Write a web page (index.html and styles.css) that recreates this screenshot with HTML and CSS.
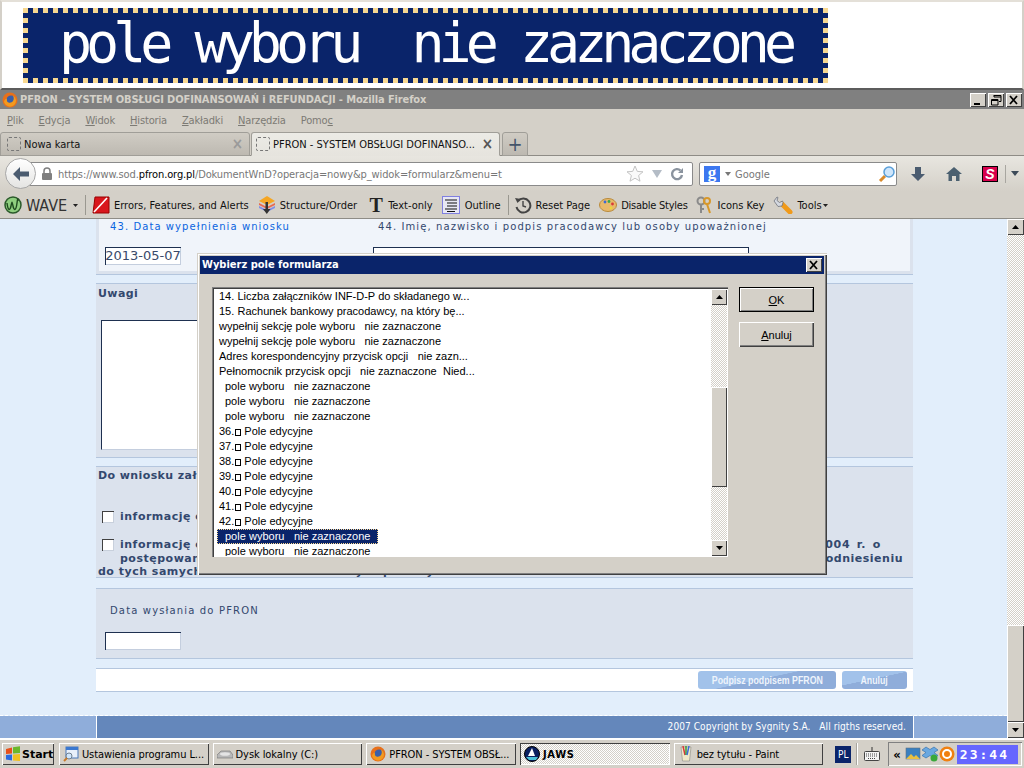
FILE: index.html
```html
<!DOCTYPE html>
<html lang="pl">
<head>
<meta charset="utf-8">
<title>PFRON</title>
<link rel="stylesheet" href="styles.css">
</head>
<body>
<div class="screen">
  <header class="banner"><div class="banner-box">pole wyboru  nie zaznaczone</div></header>

  <div class="titlebar">
    <svg class="ff" viewBox="0 0 16 16" width="16" height="16"><circle cx="8" cy="8" r="7.500" fill="#e8701a"/><circle cx="9" cy="8" r="4.600" fill="#3a5fa8"/><path d="M2 10c1 3 4 5 7 4.600 3-.4 5-3 5-6 0-2-1-4-3-5 1 2 1 4 0 5.500-1 1.500-3 2-4.500 1.400C5 10 4.500 8 5 6.500 3 7 2 8.500 2 10z" fill="#f39a1e"/></svg>
    <span class="title-text">PFRON - SYSTEM OBSŁUGI DOFINANSOWAŃ i REFUNDACJI - Mozilla Firefox</span>
    <div class="winbtns">
      <span class="winbtn"><svg viewBox="0 0 16 14" width="16" height="14"><rect x="4" y="10" width="6" height="2" fill="#000"/></svg></span>
      <span class="winbtn"><svg viewBox="0 0 16 14" width="16" height="14"><path d="M6 2.500h7v6H11M6 2v2h7M3.500 6.500h6.500v5.500H3.500zM3 7.500h7" fill="none" stroke="#000"/></svg></span>
      <span class="winbtn"><svg viewBox="0 0 16 14" width="16" height="14"><path d="M4 3l7 8M11 3l-7 8" stroke="#000" stroke-width="1.800"/></svg></span>
    </div>
  </div>

  <nav class="menubar">
    <span><u>P</u>lik</span><span><u>E</u>dycja</span><span><u>W</u>idok</span><span><u>H</u>istoria</span><span><u>Z</u>akładki</span><span><u>N</u>arzędzia</span><span>Pomo<u>c</u></span>
  </nav>

  <div class="tabbar">
    <div class="tab"><i class="tab-ico"></i><span class="tab-label">Nowa karta</span><b class="tab-x">×</b></div>
    <div class="tab tab-on"><i class="tab-ico"></i><span class="tab-label">PFRON - SYSTEM OBSŁUGI DOFINANSO...</span><b class="tab-x">×</b></div>
    <div class="tab tab-plus">+</div>
  </div>

  <div class="navbar">
    <div class="back"><svg viewBox="0 0 20 20" width="20" height="20"><path d="M2 10l7-7v4.500h9v5H9V17z" fill="#4b5c70"/></svg></div>
    <div class="urlbar">
      <svg class="lock" viewBox="0 0 12 14" width="12" height="14"><rect x="1" y="6" width="10" height="7" rx="1" fill="#7f7f7f"/><path d="M3 6V4a3 3 0 016 0v2" fill="none" stroke="#7f7f7f" stroke-width="1.500"/></svg>
      <span class="url">https://www.sod.<b>pfron.org.pl</b>/DokumentWnD?operacja=nowy&amp;p_widok=formularz&amp;menu=t</span>
      <svg viewBox="0 0 18 18" width="18" height="18"><path d="M9 1l2.300 5.400 5.700.4-4.400 3.700 1.400 5.700L9 13.200l-5 3 1.400-5.700L1 6.800l5.700-.4z" fill="#fafafa" stroke="#c4c4c4"/></svg>
      <svg class="drop" viewBox="0 0 10 8" width="10" height="8"><path d="M0 0h10L5 8z" fill="#b4bcc6"/></svg>
      <svg viewBox="0 0 14 14" width="14" height="14"><path d="M12 8a5 5 0 11-1.500-4.500" fill="none" stroke="#8a939e" stroke-width="2.400"/><path d="M13 1v5H8z" fill="#8a939e"/></svg>
    </div>
    <div class="searchbar">
      <span class="gbox">g</span>
      <svg class="tiny" viewBox="0 0 6 4" width="6" height="4"><path d="M0 0h6L3 4z" fill="#777"/></svg>
      <span class="gtext">Google</span>
      <svg viewBox="0 0 18 18" width="18" height="18"><path d="M2 16l5-5" stroke="#d98a2b" stroke-width="3"/><circle cx="11" cy="7" r="5" fill="#cfe6fb" stroke="#5a9fd8" stroke-width="1.500"/></svg>
    </div>
    <svg class="dl" viewBox="0 0 16 16" width="16" height="16"><path d="M5 1h6v7h4l-7 7-7-7h4z" fill="#4b5c70"/></svg>
    <svg class="home" viewBox="0 0 16 16" width="16" height="16"><path d="M8 1L0 8h2.500v7H6v-5h4v5h3.500V8H16z" fill="#4b6070"/></svg>
    <span class="sbox">S</span>
    <span class="navsep"></span>
    <svg class="navdrop" viewBox="0 0 8 5" width="8" height="5"><path d="M0 0h8L4 5z" fill="#3c4a58"/></svg>
  </div>

  <div class="wavebar">
    <svg class="w-ico" viewBox="0 0 18 18" width="18" height="18"><circle cx="9" cy="9" r="8" fill="#8fcf7f" stroke="#2b5a2b" stroke-width="1.500"/><path d="M3 7c1 8 3 8 4 3s1-5 2 0 3 5 4-3 1-2 1-2" fill="none" stroke="#1f4a1f" stroke-width="1.400"/></svg>
    <span class="wave-name">WAVE</span>
    <svg class="wave-drop" viewBox="0 0 5 3" width="5" height="3"><path d="M0 0h5L2.500 3z" fill="#222"/></svg>
    <span class="wsep"></span>
    <span class="witem w-err"><svg viewBox="0 0 18 18" width="18" height="18"><path d="M3 1h14v16H1z" fill="#d9161c" stroke="#900"/><path d="M2 16L15 2" stroke="#fff" stroke-width="1.600"/></svg>Errors, Features, and Alerts</span>
    <span class="witem w-str"><svg viewBox="0 0 18 18" width="18" height="18"><path d="M9 0l8 5-8 4-8-4z" fill="#f5a623"/><path d="M1 7l8 4 8-4v2l-8 4-8-4z" fill="#e86a50"/><path d="M1 10l8 4 8-4v2l-8 4-8-4z" fill="#7f8fe8"/><path d="M7.500 6h2.500v7h2.500l-3.700 5-3.800-5h2.500z" fill="#333"/></svg>Structure/Order</span>
    <span class="witem w-txt"><span class="big-t">T</span>Text-only</span>
    <span class="witem w-out"><svg class="outline-ico" viewBox="0 0 18 18" width="18" height="18"><rect x=".5" y=".5" width="17" height="17" fill="#e8e8f4" stroke="#8080e0"/><path d="M3 4h12M5 7h10M5 10h10M3 13h12M5 15.500h8" stroke="#111" stroke-width="1.200"/></svg>Outline</span>
    <span class="wsep"></span>
    <span class="witem w-res"><svg viewBox="0 0 18 18" width="18" height="18"><path d="M4 5a7 7 0 11-1.500 6" fill="none" stroke="#444" stroke-width="2"/><path d="M1 2l6 1-3.500 4z" fill="#444"/><path d="M9 5v5l3 1" fill="none" stroke="#444" stroke-width="1.400"/></svg>Reset Page</span>
    <span class="witem w-pal"><svg viewBox="0 0 18 16" width="18" height="16"><ellipse cx="9" cy="8" rx="8.500" ry="6.500" fill="#e8b96a" stroke="#b98a3a"/><circle cx="6" cy="5" r="1.400" fill="#3a6ad8"/><circle cx="10" cy="4.500" r="1.400" fill="#3aa84a"/><circle cx="13.500" cy="7" r="1.400" fill="#d83a3a"/><circle cx="12" cy="11" r="1.400" fill="#e8d83a"/></svg>Disable Styles</span>
    <span class="witem w-key"><svg viewBox="0 0 18 18" width="18" height="18"><circle cx="6" cy="5" r="3.500" fill="none" stroke="#8a8a8a" stroke-width="2"/><path d="M6 8v9M6 13h3" stroke="#8a8a8a" stroke-width="2"/><circle cx="12" cy="5" r="3" fill="none" stroke="#d8982a" stroke-width="2"/><path d="M12 8l3 9" stroke="#d8982a" stroke-width="2"/></svg>Icons Key</span>
    <span class="witem w-tool"><svg viewBox="0 0 20 18" width="20" height="18"><path d="M9 8l8 8" stroke="#f09a1a" stroke-width="5" stroke-linecap="round"/><path d="M1 5l3-4 1 .5-1 3 2.500 2 3-1.500.5 1.500-1 3.500-4 .5z" fill="#d4d8e0" stroke="#70747c" stroke-width=".8"/></svg>Tools<svg class="tool-drop" viewBox="0 0 5 3" width="5" height="3"><path d="M0 0h5L2.500 3z" fill="#222"/></svg></span>
  </div>

  <div class="viewport">
    <div class="page">
      <main class="content">
        <section class="sec sec-top">
          <div class="sec-inner">
            <div class="col-a">
              <div class="lbl-blue">43. Data wypełnienia wniosku</div>
              <div class="date-input">2013-05-07</div>
            </div>
            <div class="col-b">
              <div class="lbl-dark">44. Imię, nazwisko i podpis pracodawcy lub osoby upoważnionej</div>
              <div class="sign-box"></div>
            </div>
          </div>
        </section>

        <section class="sec sec-notes">
          <div class="sec-title">Uwagi</div>
          <div class="notes-box"></div>
        </section>

        <section class="sec sec-attach">
          <div class="sec-title">Do wniosku załączam:</div>
          <div class="check-row check-one"><i class="check"></i><span>informację o</span></div>
          <div class="check-row check-two"><i class="check"></i><span>informację o</span><span class="far">2004 r. o</span></div>
          <div class="cont-line"><span class="indent">postępowaniu</span><span class="far far-2">odniesieniu</span></div>
          <div class="cont-line">do tych samych kosztów kwalifikowalnych pomocy</div>
        </section>

        <section class="sec sec-send">
          <div class="send-label">Data wysłania do PFRON</div>
          <div class="send-input"></div>
        </section>

        <section class="actions">
          <button class="act act-sign"><span class="act-text">Podpisz podpisem PFRON</span></button>
          <button class="act act-cancel"><span class="act-text">Anuluj</span></button>
        </section>
      </main>
      <footer class="footer">
        <div class="foot-side"></div>
        <div class="foot-main">2007 Copyright by Sygnity S.A.&nbsp;&nbsp; All rigths reserved.</div>
        <div class="foot-rest"></div>
      </footer>
    </div>
    <div class="vscroll">
      <span class="sb-btn"><svg viewBox="0 0 7 4" width="7" height="4"><path d="M0 4h7L3.500 0z"/></svg></span>
      <span class="sb-track sb-track-page"></span>
      <span class="sb-thumb sb-thumb-page"></span>
      <span class="sb-btn"><svg viewBox="0 0 7 4" width="7" height="4"><path d="M0 0h7L3.500 4z"/></svg></span>
    </div>
  </div>

  <footer class="taskbar">
    <button class="start"><svg viewBox="0 0 16 16" width="16" height="16"><path d="M1 3l6-1.500V7.500L1 8z" fill="#e8501a"/><path d="M8 1.300l7-1V7l-7 .5z" fill="#6ab82a"/><path d="M1 9l6-.5V14.500L1 13.500z" fill="#2a6ae0"/><path d="M8 8.500l7-.5v7l-7-.5z" fill="#f0c020"/></svg>Start</button>
    <button class="task"><svg viewBox="0 0 16 16" width="16" height="16"><rect x="3" y="1" width="12" height="11" fill="#e8f0fa" stroke="#4a78b8"/><rect x="3" y="1" width="12" height="3" fill="#3a78d0"/><circle cx="6" cy="10" r="3" fill="#cfe6fb" stroke="#708090"/><path d="M4 12l-3 3" stroke="#c87a2a" stroke-width="2"/></svg><span>Ustawienia programu L...</span></button>
    <button class="task"><svg viewBox="0 0 16 16" width="16" height="16"><path d="M0 9l4-4h9l3 4v3H0z" fill="#b8b8b8" stroke="#707070" stroke-width=".6"/><ellipse cx="8" cy="8" rx="5" ry="1.800" fill="#e4e4e4"/></svg><span>Dysk lokalny (C:)</span></button>
    <button class="task"><svg viewBox="0 0 16 16" width="16" height="16"><circle cx="8" cy="8" r="7.500" fill="#e8701a"/><circle cx="9" cy="8" r="4.600" fill="#3a5fa8"/><path d="M2 10c1 3 4 5 7 4.600 3-.4 5-3 5-6 0-2-1-4-3-5 1 2 1 4 0 5.500-1 1.500-3 2-4.500 1.400C5 10 4.500 8 5 6.500 3 7 2 8.500 2 10z" fill="#f39a1e"/></svg><span>PFRON - SYSTEM OBSŁ...</span></button>
    <button class="task task-on"><svg viewBox="0 0 16 16" width="16" height="16"><circle cx="8" cy="8" r="7.500" fill="#0a1f60" stroke="#000"/><path d="M8 2l3 8H4z" fill="#fff"/><path d="M2 11h12l-2 3H5z" fill="#4ac0d8"/></svg><span>JAWS</span></button>
    <button class="task"><svg viewBox="0 0 16 16" width="16" height="16"><path d="M3 1h10l-1.500 14h-7z" fill="#f0e8c8" stroke="#888" stroke-width=".6"/><path d="M5 0l2 9" stroke="#d83a3a" stroke-width="1.500"/><path d="M8 0v9" stroke="#3a9a3a" stroke-width="1.500"/><path d="M11 0L9 9" stroke="#3a6ad8" stroke-width="1.500"/></svg><span>bez tytułu - Paint</span></button>
    <span class="lang">PL</span>
    <span class="tsep"></span>
    <svg class="kbd" viewBox="0 0 16 16" width="16" height="16"><path d="M8 1v4" stroke="#333"/><rect x=".5" y="5.500" width="15" height="9" rx="1" fill="#f4f4f4" stroke="#444"/><path d="M2 8h12M2 10h12M4 12.500h8" stroke="#444" stroke-dasharray="1 1"/></svg>
    <div class="tray">
      <b class="tray-more">«</b>
      <svg viewBox="0 0 16 16" width="16" height="16"><rect x="1" y="2" width="14" height="11" fill="#3a80c0" stroke="#607080" stroke-width=".6"/><path d="M1 13l5-5 3 3 2-2 4 4z" fill="#e8c040"/></svg>
      <svg viewBox="0 0 16 16" width="16" height="16"><path d="M4 1l4 2.500L12 1l4 3-4 2.500 4 3-4 2.500-4-2.500L4 12 0 9.500l4-3-4-2.500z" fill="#6aa8e0" stroke="#2a68a8" stroke-width=".6"/><circle cx="12" cy="12" r="3.500" fill="#3aa83a"/></svg>
      <svg viewBox="0 0 16 16" width="16" height="16"><circle cx="8" cy="8" r="7.500" fill="#f08010"/><circle cx="8" cy="8" r="4" fill="none" stroke="#fff" stroke-width="2"/></svg>
      <span class="clock">23:44</span>
    </div>
  </footer>

  <div class="dialog">
    <div class="dlg-title"><span>Wybierz pole formularza</span><span class="dlg-close"><svg viewBox="0 0 16 14" width="16" height="14"><path d="M4 3l7 8M11 3l-7 8" stroke="#000" stroke-width="1.800"/></svg></span></div>
    <div class="dlg-body">
      <div class="listbox">
        <ul class="rows">
          <li>14. Liczba załączników INF-D-P do składanego w...</li>
          <li>15. Rachunek bankowy pracodawcy, na który bę...</li>
          <li>wypełnij sekcję pole wyboru&nbsp;&nbsp; nie zaznaczone</li>
          <li>wypełnij sekcję pole wyboru&nbsp;&nbsp; nie zaznaczone</li>
          <li>Adres korespondencyjny przycisk opcji&nbsp;&nbsp; nie zazn...</li>
          <li>Pełnomocnik przycisk opcji&nbsp;&nbsp; nie zaznaczone&nbsp; Nied...</li>
          <li class="pad">pole wyboru&nbsp;&nbsp; nie zaznaczone</li>
          <li class="pad">pole wyboru&nbsp;&nbsp; nie zaznaczone</li>
          <li class="pad">pole wyboru&nbsp;&nbsp; nie zaznaczone</li>
          <li>36.<i class="sq"></i>Pole edycyjne</li>
          <li>37.<i class="sq"></i>Pole edycyjne</li>
          <li>38.<i class="sq"></i>Pole edycyjne</li>
          <li>39.<i class="sq"></i>Pole edycyjne</li>
          <li>40.<i class="sq"></i>Pole edycyjne</li>
          <li>41.<i class="sq"></i>Pole edycyjne</li>
          <li>42.<i class="sq"></i>Pole edycyjne</li>
          <li class="pad"><span class="selected">pole wyboru&nbsp;&nbsp; nie zaznaczone</span></li>
          <li class="pad">pole wyboru&nbsp;&nbsp; nie zaznaczone</li>
        </ul>
        <div class="list-scroll">
          <span class="sb-btn"><svg viewBox="0 0 7 4" width="7" height="4"><path d="M0 4h7L3.500 0z"/></svg></span>
          <span class="sb-track sb-track-a"></span>
          <span class="sb-thumb sb-thumb-list"></span>
          <span class="sb-track sb-track-b"></span>
          <span class="sb-btn"><svg viewBox="0 0 7 4" width="7" height="4"><path d="M0 0h7L3.500 4z"/></svg></span>
        </div>
      </div>
      <div class="dlg-actions">
        <button class="dlg-btn dlg-ok"><u>O</u>K</button>
        <button class="dlg-btn"><u>A</u>nuluj</button>
      </div>
    </div>
  </div>
</div>
</body>
</html>
```
FILE: styles.css
```css
* { box-sizing: border-box; }
html, body { margin: 0; padding: 0; }
body { width: 1024px; height: 768px; overflow: hidden; background: #d4d0c8; font-family: "DejaVu Sans Condensed", "DejaVu Sans", sans-serif; font-size: 11px; color: #000; }
button { font: inherit; padding: 0; margin: 0; }
svg { display: block; flex: none; }
u { text-decoration: underline; }

.screen { position: relative; width: 1024px; height: 768px; display: flex; flex-direction: column; }

/* banner */
.banner { height: 90px; flex: none; background: #fff; border: 2px solid #d4d0c8; border-bottom: 2px solid #5c5c5c; border-top-color: #e4e0d8; padding: 6px 0 0 21px; }
.banner-box {
  width: 805px; height: 75px; color: #fff; padding-left: 36px; overflow: hidden;
  font-family: "DejaVu Sans Mono", monospace; font-size: 55px; letter-spacing: -6px; line-height: 70px; white-space: pre;
  background:
    repeating-linear-gradient(90deg, #f8d890 0 5px, #0a246a 5px 10px) left top / 100% 5px no-repeat,
    repeating-linear-gradient(90deg, #f8d890 0 5px, #0a246a 5px 10px) left bottom / 100% 5px no-repeat,
    repeating-linear-gradient(180deg, #f8d890 0 5px, #0a246a 5px 10px) left top / 5px 100% no-repeat,
    repeating-linear-gradient(180deg, #f8d890 0 5px, #0a246a 5px 10px) right top / 5px 100% no-repeat,
    #0a246a;
}

/* title */
.titlebar { height: 19px; flex: none; background: #808080; display: flex; align-items: center; padding-left: 2px; color: #d4d0c8; font-weight: bold; }
.title-text { margin-left: 2px; font-size: 11px; letter-spacing: -.12px; white-space: nowrap; }
.winbtns { margin-left: auto; margin-right: 2px; display: flex; gap: 2px; }
.winbtn, .dlg-close { width: 16px; height: 14px; background: #d4d0c8; display: block; box-shadow: inset 1px 1px 0 #fff, inset -1px -1px 0 #404040; }

/* menu */
.menubar { height: 22px; flex: none; display: flex; align-items: center; padding-left: 7px; gap: 15px; color: #7c7a74; font-size: 11px; letter-spacing: -.15px; }

/* tabs */
.tabbar { height: 25px; flex: none; display: flex; align-items: flex-end; border-bottom: 1px solid #8e8c86; gap: 1px; }
.tab { width: 250px; height: 24px; margin-bottom: -1px; background: linear-gradient(#d0ccc4, #bdb9b1); border: 1px solid #a09e98; border-radius: 3px 3px 0 0; display: flex; align-items: center; padding: 0 6px; color: #111; }
.tab-on { width: 249px; padding-left: 4px; background: linear-gradient(#ecebe6, #e6e4de); border-bottom-color: #e6e4de; }
.tab-ico { width: 14px; height: 14px; border: 1px dashed #777; border-radius: 2px; flex: none; }
.tab-label { margin-left: 3px; flex: 1; white-space: nowrap; overflow: hidden; }
.tab-x { font-size: 15px; line-height: 14px; color: #9a9a9a; }
.tab-on .tab-x { color: #555; }
.tab-plus { width: 26px; margin-left: 1px; justify-content: center; font-size: 20px; color: #44556a; padding: 0; }

/* nav */
.navbar { height: 35px; flex: none; background: linear-gradient(#e8e6e0, #d4d0c8); display: flex; align-items: center; padding-left: 5px; }
.back { width: 31px; height: 31px; border-radius: 50%; background: linear-gradient(#fff, #e4e4e2); border: 1px solid #a8a8a8; display: flex; align-items: center; justify-content: center; position: relative; z-index: 1; flex: none; }
.urlbar { width: 668px; height: 24px; margin-left: -11px; background: #fff; border: 1px solid #8a8a8a; border-radius: 2px; display: flex; align-items: center; padding-left: 15px; gap: 5px; }
.url { width: 563px; padding-top: 2px; color: #777; font-size: 11px; letter-spacing: -.11px; white-space: nowrap; }
.url b { font-weight: normal; color: #000; }
.drop { margin: 0 3px; }
.searchbar { width: 198px; height: 24px; margin-left: 6px; background: #fff; border: 1px solid #8a8a8a; border-radius: 2px; display: flex; align-items: center; padding-left: 4px; }
.gbox { width: 16px; height: 16px; background: #3c78f0; color: #fff; font-family: "Liberation Serif", serif; font-weight: bold; font-size: 17px; line-height: 13px; text-align: center; }
.tiny { margin-left: 5px; }
.gtext { margin-left: 4px; padding-top: 2px; flex: 1; color: #777; font-size: 11px; }
.dl { margin-left: 13px; }
.home { margin-left: 20px; }
.sbox { width: 16px; height: 16px; margin-left: 20px; background: #d8004c; border: 1px solid #000; color: #fff; font: italic bold 14px/14px "Liberation Sans", sans-serif; text-align: center; }
.navsep { width: 1px; height: 18px; margin-left: 7px; background: #a8a6a0; }
.navdrop { margin-left: 5px; }

/* wave */
.wavebar { height: 28px; flex: none; border-bottom: 1px solid #8e8c86; display: flex; align-items: center; padding: 1px 0 0 4px; color: #111; font-size: 11px; white-space: nowrap; }
.wave-name { margin-left: 4px; font-size: 16px; color: #333; width: 43px; }
.wave-drop { margin-left: 4px; }
.wsep { width: 1px; height: 20px; background: #9a9890; margin-left: 7px; }
.witem { display: flex; align-items: center; gap: 4px; }
.w-err { margin-left: 6px; }
.w-str { margin-left: 9px; }
.w-txt { margin-left: 11px; }
.big-t { font: bold 20px/18px "Liberation Serif", serif; width: 16px; text-align: center; color: #222; }
.w-out { margin-left: 9px; gap: 5px; }
.w-res { margin-left: 5px; }
.w-pal { margin-left: 9px; letter-spacing: -.25px; }
.w-key { margin-left: 7px; gap: 5px; }
.w-tool { margin-left: 9px; }
.tool-drop { margin-left: -3px; }

/* page */
.viewport { height: 519px; flex: none; display: flex; }
.page { flex: 1; display: flex; flex-direction: column; background: #e2eefb; min-width: 0; }
.content { width: 817px; margin-left: 96px; flex: 1; display: flex; flex-direction: column; font-family: "DejaVu Sans", sans-serif; color: #33486e; }
.sec { background: #dbe2ed; border-bottom: 1px solid #b4c6de; }
.sec-top { height: 56px; padding: 0 3px 3px 3px; }
.sec-inner { height: 52px; background: #f0f4fa; display: flex; overflow: hidden; }
.col-a { width: 274px; padding-top: 2px; }
.lbl-blue { margin-left: 11px; color: #0a64e0; font-size: 10px; line-height: 12px; letter-spacing: 1.080px; white-space: nowrap; }
.date-input { width: 76px; height: 18px; margin: 14px 0 0 6px; background: #fff; box-shadow: inset 1px 1px 0 #1e3050, inset -1px -1px 0 #c4cede; color: #3a4a6a; font-size: 13px; line-height: 18px; text-align: center; white-space: nowrap; }
.col-b { flex: 1; padding-top: 2px; }
.lbl-dark { margin-left: 5px; font-size: 10px; line-height: 12px; letter-spacing: 1.100px; color: #33486e; white-space: nowrap; }
.sign-box { width: 376px; height: 40px; margin-top: 14px; background: #fff; border: 1px solid #1e3050; }

.sec-notes { margin-top: 8px; height: 175px; border-top: 1px solid #b4c6de; padding: 3px 0 0 2px; }
.sec-title { font-size: 11px; font-weight: bold; letter-spacing: .4px; line-height: 14px; color: #33486e; white-space: nowrap; }
.notes-box { width: 300px; height: 130px; margin: 19px 0 0 3px; background: #fff; border: 1px solid #1e3050; border-right-color: #c4cede; border-bottom-color: #c4cede; }

.sec-attach { margin-top: 8px; height: 112px; border-top: 1px solid #b4c6de; padding: 2px 10px 0 2px; font-weight: bold; font-size: 11px; letter-spacing: .5px; white-space: nowrap; }
.check-row { display: flex; align-items: center; line-height: 14px; padding-left: 4px; gap: 6px; }
.check-one { margin-top: 27px; }
.check-two { margin-top: 14px; }
.check { width: 12px; height: 12px; background: #fff; box-shadow: inset 1px 1px 0 #404040, inset -1px -1px 0 #c8d0dc; flex: none; }
.far { margin-left: auto; margin-right: 22px; word-spacing: 2px; letter-spacing: .7px; }
.far-2 { margin-right: 0; letter-spacing: .5px; }
.cont-line { display: flex; line-height: 13px; }
.indent { margin-left: 22px; }

.sec-send { margin-top: 10px; height: 71px; border-top: 1px solid #b4c6de; padding: 16px 0 0 14px; }
.send-label { font-size: 10px; line-height: 12px; letter-spacing: 1.150px; color: #33486e; }
.send-input { width: 76px; height: 18px; margin: 15px 0 0 -5px; background: #fff; box-shadow: inset 1px 1px 0 #1e3050, inset -1px -1px 0 #c4cede; }

.actions { margin-top: 9px; height: 24px; background: #fff; border-top: 1px solid #b4c6de; border-bottom: 1px solid #b4c6de; display: flex; justify-content: flex-end; align-items: center; padding-right: 6px; gap: 6px; }
.act { height: 18px; border: 0; border-radius: 3px; background: linear-gradient(168deg, #a2c2ea 0 45%, #8fadda 46%); color: #eef4fc; font: bold 11px "Liberation Sans", sans-serif; white-space: nowrap; display: flex; align-items: center; justify-content: center; }
.act-text { display: block; transform: scaleX(.8); }
.act-sign { width: 138px; }
.act-cancel { width: 65px; }

.footer { height: 23px; flex: none; display: flex; border-top: 1px dashed #fff; }
.foot-side { width: 96px; background: #8fadda; flex: none; }
.foot-main { width: 818px; background: #6487bb; border-left: 1px solid #fff; border-right: 1px solid #fff; color: #fff; font-family: "DejaVu Sans Condensed", "DejaVu Sans", sans-serif; font-size: 10px; letter-spacing: .08px; line-height: 22px; text-align: right; padding-right: 7px; white-space: nowrap; flex: none; }
.foot-rest { flex: 1; background: #8fadda; }

/* scrollbars */
.vscroll { width: 17px; flex: none; display: flex; flex-direction: column; }
.sb-btn { height: 16px; flex: none; background: #d4d0c8; box-shadow: inset 1px 1px 0 #fff, inset -1px -1px 0 #404040; display: flex; align-items: center; justify-content: center; }
.sb-track { background-color: #fff; background-image: conic-gradient(#d4d0c8 25%, #fff 0 50%, #d4d0c8 0 75%, #fff 0); background-size: 2px 2px; display: block; }
.sb-track-page { height: 390px; flex: none; }
.sb-thumb { background: #d4d0c8; box-shadow: inset 1px 1px 0 #fff, inset -1px -1px 0 #404040; display: block; }
.sb-thumb-page { height: 97px; flex: none; }

/* taskbar */
.taskbar { height: 30px; flex: none; background: #d4d0c8; border-top: 2px solid #fff; display: flex; align-items: center; padding: 0 2px; }
.start, .task { height: 22px; border: 0; background: #d4d0c8; box-shadow: inset 1px 1px 0 #fff, inset -1px -1px 0 #404040; display: flex; align-items: center; color: #000; white-space: nowrap; }
.start { width: 52px; padding-left: 3px; gap: 1px; font: bold 11px "DejaVu Sans", sans-serif; }
.task { width: 150px; margin-left: 4px; padding-left: 4px; gap: 3px; font-size: 11px; letter-spacing: -.08px; }
.start + .task { margin-left: 5px; }
.task-on { background-color: #fff; background-image: conic-gradient(#d4d0c8 25%, #fff 0 50%, #d4d0c8 0 75%, #fff 0); background-size: 2px 2px; box-shadow: inset 1px 1px 0 #404040, inset -1px -1px 0 #fff; font-weight: bold; letter-spacing: .7px; }
.lang { width: 16px; height: 17px; margin-left: 12px; background: #0a246a; color: #fff; font-size: 10px; line-height: 17px; text-align: center; }
.tsep { width: 2px; height: 22px; margin-left: 5px; background: #a8a6a0; border-right: 1px solid #fff; }
.kbd { margin-left: 6px; }
.tray { margin-left: 8px; width: 134px; height: 24px; box-shadow: inset 1px 1px 0 #808080, inset -1px -1px 0 #fff; display: flex; align-items: center; padding-left: 5px; gap: 1px; }
.tray-more { font-size: 13px; margin-right: 3px; }
.clock { width: 61px; height: 19px; margin-left: 1px; padding-left: 3px; background: #6666ff; color: #fff; font: bold 13px/19px "DejaVu Sans Mono", monospace; letter-spacing: 2px; }

/* dialog */
.dialog { position: absolute; left: 197px; top: 253px; width: 630px; height: 322px; background: #d4d0c8; box-shadow: inset 1px 1px 0 #d4d0c8, inset 2px 2px 0 #fff, inset -1px -1px 0 #404040, inset -2px -2px 0 #808080; padding: 3px; display: flex; flex-direction: column; }
.dlg-title { height: 18px; flex: none; background: #0a246a; color: #fff; font: bold 11px/18px "DejaVu Sans Condensed", "DejaVu Sans", sans-serif; padding: 0 2px; display: flex; align-items: center; justify-content: space-between; }
.dlg-body { display: flex; padding: 13px 0 0 12px; gap: 11px; }
.listbox { width: 516px; height: 270px; display: flex; background: #fff; box-shadow: inset 1px 1px 0 #808080, inset 2px 2px 0 #404040, inset -1px -1px 0 #fff; padding: 2px 1px 1px 4px; }
.rows { list-style: none; margin: 0; padding: 0; flex: 1; height: 267px; overflow: hidden; font: 11px/15px "Liberation Sans", sans-serif; white-space: nowrap; word-spacing: .1px; }
.rows li { height: 15px; padding-left: 3px; }
.rows li.pad { padding-left: 9px; }
.selected { display: inline-block; margin-left: -8px; padding: 0 1px 0 8px; width: 161px; height: 15px; background: #0a246a; color: #fff; outline: 1px dotted #f8d890; outline-offset: -1px; }
.sq { display: inline-block; width: 6px; height: 7px; margin: 0 3px 0 1px; border: 1px solid #000; vertical-align: -1px; }
.list-scroll { width: 16px; flex: none; display: flex; flex-direction: column; height: 267px; }
.sb-track-a { height: 82px; flex: none; }
.sb-thumb-list { height: 100px; flex: none; }
.sb-track-b { flex: 1; }
.dlg-actions { display: flex; flex-direction: column; gap: 10px; }
.dlg-btn { width: 75px; height: 25px; border: 0; background: #d4d0c8; box-shadow: inset 1px 1px 0 #fff, inset -1px -1px 0 #404040, inset -2px -2px 0 #808080; font: 11px "Liberation Sans", sans-serif; color: #000; }
.dlg-ok { box-shadow: inset 0 0 0 1px #000, inset 2px 2px 0 #fff, inset -2px -2px 0 #808080; }
```
